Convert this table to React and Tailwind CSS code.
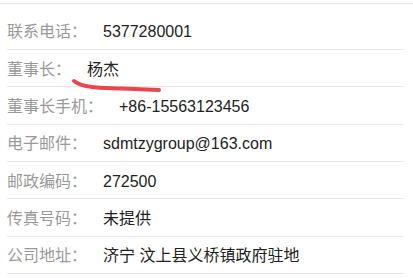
const rows = [
  { label: "联系电话：", value: "5377280001" },
  { label: "董事长：", value: "杨杰" },
  { label: "董事长手机：", value: "+86-15563123456" },
  { label: "电子邮件：", value: "sdmtzygroup@163.com" },
  { label: "邮政编码：", value: "272500" },
  { label: "传真号码：", value: "未提供" },
  { label: "公司地址：", value: "济宁 汶上县义桥镇政府驻地" },
];

const App = () => {
  return (
    <div
      className="relative w-[413px] h-[278px] bg-white overflow-hidden"
      style={{ fontFamily: '"Liberation Sans", "Noto Sans CJK SC", sans-serif' }}
    >
      <div className="h-[4px] border-b border-[#e6e6e6]" />
      <ul className="pt-[8.67px] ml-[7px] mr-[9px]">
        {rows.map((row) => (
          <li
            key={row.label}
            className="h-[37.35px] pt-[3px] flex items-center border-b border-[#e8e8e8] text-[16px] leading-none"
          >
            <span className="text-[#999999]">{row.label}</span>
            <span className="ml-4 text-[#222222]">{row.value}</span>
          </li>
        ))}
      </ul>

      {/* hand-drawn red underline under the chairman's name */}
      <svg
        className="absolute left-0 top-0 pointer-events-none"
        width="413"
        height="278"
        viewBox="0 0 413 278"
      >
        <path
          d="M74 81 C80 86 90 87.5 105 88 S150 89.5 159 90"
          fill="none"
          stroke="#e8474e"
          strokeWidth="4"
          strokeLinecap="round"
        />
      </svg>
    </div>
  );
};

export default App;
